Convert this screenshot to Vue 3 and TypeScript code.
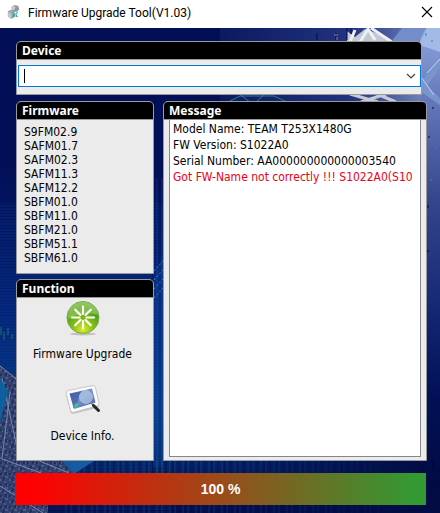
<script setup lang="ts">
import { ref } from 'vue'

interface LogLine {
  text: string
  error?: boolean
}

const device = ref('')
const progress = ref(100)
const firmware: string[] = [
  'S9FM02.9', 'SAFM01.7', 'SAFM02.3', 'SAFM11.3', 'SAFM12.2',
  'SBFM01.0', 'SBFM11.0', 'SBFM21.0', 'SBFM51.1', 'SBFM61.0',
]
const messages: LogLine[] = [
  { text: 'Model Name: TEAM T253X1480G' },
  { text: 'FW Version: S1022A0' },
  { text: 'Serial Number: AA000000000000003540' },
  { text: 'Got FW-Name not correctly !!! S1022A0(S10', error: true },
]
</script>

<template>
  <div class="window">
    <header class="titlebar">
      <svg class="app-icon" viewBox="0 0 16 18" aria-hidden="true">
        <path d="M1 8l4-2 4 2v6l-4 3-4-3z" fill="#a4a8a8" />
        <path d="M5 3l4-2 4 1 1 4-3 3-5-1z" fill="#92999b" />
        <path d="M6 2l4 1-2 4-3-1z" fill="#c9cccc" />
        <path d="M1 9l4 2v5l-4-2z" fill="#c2c5c5" />
        <path d="M6 9l3 2 4-3-2 4 2 3-4-1-3 2 1-4z" fill="#25aab0" />
        <path d="M8 10l2 2 2-1M9 15l1-3" stroke="#a6eeee" fill="none" />
      </svg>
      <h1 class="title">Firmware Upgrade Tool(V1.03)</h1>
      <button class="close" type="button" aria-label="Close">
        <svg viewBox="0 0 12 12"><path d="M1 1l10 10M11 1L1 11" fill="none" stroke="#000" stroke-width="1.1" /></svg>
      </button>
    </header>

    <main class="body">
      <svg class="backdrop" viewBox="0 0 440 485" preserveAspectRatio="none" aria-hidden="true">
        <defs>
          <linearGradient id="base" x1="0" y1="0" x2="0" y2="1">
            <stop offset="0" stop-color="#020f55" />
            <stop offset=".3" stop-color="#021058" />
            <stop offset=".6" stop-color="#022479" />
            <stop offset=".8" stop-color="#043783" />
            <stop offset="1" stop-color="#020e4c" />
          </linearGradient>
          <linearGradient id="side" x1="0" y1="0" x2="0" y2="1">
            <stop offset="0" stop-color="#8fa5dc" />
            <stop offset=".16" stop-color="#6477ba" />
            <stop offset=".38" stop-color="#34458c" />
            <stop offset=".62" stop-color="#142773" />
            <stop offset=".8" stop-color="#021158" />
            <stop offset="1" stop-color="#010b43" />
          </linearGradient>
          <linearGradient id="fade" x1="0" y1="0" x2="1" y2="0">
            <stop offset="0" stop-color="#020e4b" stop-opacity="0" />
            <stop offset="1" stop-color="#020b42" />
          </linearGradient>
          <linearGradient id="sky" x1="0" y1="0" x2="1" y2="0">
            <stop offset="0" stop-color="#0a1a60" />
            <stop offset=".6" stop-color="#223480" />
            <stop offset="1" stop-color="#8294c9" />
          </linearGradient>
          <pattern id="lines" width="11" height="6" patternUnits="userSpaceOnUse">
            <path d="M0 1h11M0 4h11" stroke="#1763ab" stroke-opacity=".2" />
          </pattern>
          <pattern id="bars" width="13" height="40" patternUnits="userSpaceOnUse">
            <path d="M1 0v40M6 0v40" stroke="#1660b0" stroke-opacity=".34" />
            <path d="M4 0v40M10 0v40" stroke="#00062f" stroke-opacity=".45" />
          </pattern>
          <pattern id="grain" width="9" height="11" patternUnits="userSpaceOnUse">
            <path d="M0 1h2M4 3h2M7 6h1M2 7h1M5 9h3" stroke="#858fb7" />
            <path d="M3 0v2M6 4v3M1 5v2M4 9v2" stroke="#050931" />
          </pattern>
        </defs>
        <rect width="440" height="485" fill="url(#base)" />
        <rect y="175" width="170" height="310" fill="url(#lines)" />
        <rect x="150" y="150" width="20" height="300" fill="url(#bars)" />
        <rect x="60" y="432" width="320" height="53" fill="url(#bars)" />
        <rect x="200" y="432" width="240" height="53" fill="url(#fade)" />

        <rect x="220" width="220" height="14" fill="url(#sky)" />
        <rect x="220" y="66" width="220" height="8" fill="url(#sky)" />
        <path d="M347 14V3l8 6 10-8 14 5 14 8z" fill="#c3c8d4" />
        <path d="M350 14l5-12M360 14l8-13 7 11M371 0l21 14" fill="none" stroke="#edf0f5" stroke-width="3" />
        <path d="M347 0v12M351 0v6M317 5v7M336 5v7" stroke="#060b36" />
        <path d="M334 7h4M337 9v3" stroke="#a878a1" />
        <path d="M228 74l12-6h34l13 6M239 66l11 8M265 66l-9 8" fill="none" stroke="#2a799b" />
        <path d="M350 66l28 8M361 74l25-8M377 66l19 8" stroke="#c6cad9" stroke-width="3" />

        <rect x="420" width="20" height="457" fill="url(#side)" />
        <path d="M391 14l11-14h24l-8 14z" fill="#728dca" />
        <path d="M420 14l7-14h13v24l-20-7z" fill="#a3b9e6" />
        <path d="M420 56l20-28v12l-13 18 13 12v7l-20-14z" fill="#7a94cc" />
        <path d="M427 45l13-14M421 49l13 18" stroke="#c3d4f2" />
        <path d="M433 79v2M429 108v2M428 177v3M428 222v2M433 433v8" stroke="#02091f" />
        <path d="M426 5v3M432 12v2M430 72v2M436 118v2M431 151v2" stroke="#238cc6" />

        <path d="M0 337l16 12v73l46 10 12 14H48v39H0z" fill="#30406f" />
        <path d="M0 337l16 12v73l46 10 12 14H48v39H0z" fill="url(#grain)" opacity=".65" />
        <path d="M0 338l16 13M2 350l14 65M10 364L2 431l42 15M0 458l43 27M15 423l54 22" fill="none" stroke="#7a88ae" />
        <path d="M0 350l8 14-8 31z" fill="#0d5f9e" />
        <path d="M62 433h32l-20 13z" fill="#145ba2" />
        <path d="M153 250l10-22v211h-10z" fill="#1250a7" opacity=".25" />
        <path d="M154 243l9-10M154 252l9-10M154 261l9-10M154 270l9-10" stroke="#3486c7" stroke-dasharray="2 2" />
        <path d="M1 299v8M4 304v8M8 300v7M12 306v5" stroke="#22775f" />
      </svg>

      <section class="panel device">
        <h2 class="caption"><label for="device">Device</label></h2>
        <div class="combo">
          <input id="device" v-model="device" class="combo-input" type="text" autocomplete="off" />
          <span class="caret"></span>
          <button class="combo-button" type="button" aria-label="Show devices">
            <svg viewBox="0 0 10 6"><path d="M1 1l4 4 4-4" fill="none" stroke="#444" stroke-width="1.2" /></svg>
          </button>
        </div>
      </section>

      <div class="columns">
        <div class="left">
          <section class="panel">
            <h2 class="caption">Firmware</h2>
            <ul class="firmware">
              <li v-for="name in firmware" :key="name">{{ name }}</li>
            </ul>
          </section>

          <section class="panel function">
            <h2 class="caption">Function</h2>
            <div class="actions">
              <button class="action" type="button">
                <svg class="action-icon" viewBox="0 0 36 36" aria-hidden="true">
                  <defs>
                    <radialGradient id="green" cx=".5" cy=".88" r=".85">
                      <stop offset="0" stop-color="#d9ed25" />
                      <stop offset=".4" stop-color="#83bd16" />
                      <stop offset=".75" stop-color="#4b9e18" />
                      <stop offset="1" stop-color="#76b646" />
                    </radialGradient>
                  </defs>
                  <ellipse cx="18" cy="34" rx="13" ry="1.5" fill="#bfc2bd" />
                  <circle cx="18" cy="17.5" r="16" fill="url(#green)" stroke="#76a951" />
                  <path d="M3 15a15 13 0 0 1 30 0c-8-3-21-2-30 4z" fill="#b9df85" opacity=".45" />
                  <path d="M18 6.500v7.500M18 21v7.500M7 17.500h7.500M21.500 17.500h7.500M10.200 9.700l5.300 5.300M20.500 20l5.300 5.300M25.800 9.700l-5.300 5.300M15.500 20l-5.300 5.300" fill="none" stroke="#fff" stroke-width="2.200" stroke-linecap="round" />
                </svg>
                <span>Firmware Upgrade</span>
              </button>
              <button class="action" type="button">
                <svg class="action-icon" viewBox="0 0 36 36" aria-hidden="true">
                  <defs>
                    <linearGradient id="screen" x1="0" y1="0" x2="1" y2="1">
                      <stop offset="0" stop-color="#4560aa" />
                      <stop offset=".45" stop-color="#7792ce" />
                      <stop offset="1" stop-color="#455fa6" />
                    </linearGradient>
                  </defs>
                  <path d="M3 9.500l25-5q2 0 2.500 2l3.500 17q0 2-2 2.500L8 32q-2 0-2.500-2L1 12q0-2 2-2.500z" fill="#c3c3c3" />
                  <path d="M3 8.500l25-5q2 0 2.500 2l3.500 16q0 2-2 2.500L8 30.500q-2 0-2.500-2L1 11q0-2 2-2.500z" fill="#fafafa" stroke="#bcbcbc" stroke-width=".8" />
                  <path d="M4.500 11.500L27 6.500l3.500 14L9 27z" fill="url(#screen)" />
                  <path d="M5 12l11-2.500L11 25l-2.500 1z" fill="#3654a4" opacity=".6" />
                  <circle cx="21" cy="15" r="6.500" fill="#d2e3f3" fill-opacity=".5" stroke="#b3c5dd" stroke-opacity=".7" />
                  <path d="M9 23l2-2 2 1-1 3-2 1z" fill="#37ce78" />
                  <path d="M26 21l3 2.500" stroke="#888" stroke-width="2" />
                  <path d="M28.500 23.500l5 5" stroke="#252525" stroke-width="3" stroke-linecap="round" />
                </svg>
                <span>Device Info.</span>
              </button>
            </div>
          </section>
        </div>

        <section class="panel message">
          <h2 class="caption">Message</h2>
          <div class="log" role="log">
            <p v-for="line in messages" :key="line.text" :class="{ error: line.error }">{{ line.text }}</p>
          </div>
        </section>
      </div>

      <div class="progress" role="progressbar" aria-valuemin="0" aria-valuemax="100" :aria-valuenow="progress" aria-label="Upgrade progress">
        {{ progress }} %
      </div>
    </main>
  </div>
</template>

<style>
body {
  margin: 0;
}
</style>

<style scoped>
.window {
  display: flex;
  flex-direction: column;
  min-height: 100vh;
  color: #000;
  font-family: "DejaVu Sans Condensed", "DejaVu Sans", sans-serif;
  font-size: 12px;
}
h1, h2, p, ul {
  margin: 0;
  padding: 0;
}
button {
  border: 0;
  padding: 0;
  background: none;
  color: inherit;
  font: inherit;
}
svg {
  display: block;
}
.titlebar {
  display: flex;
  align-items: center;
  box-sizing: border-box;
  height: 28px;
  padding: 0 7px;
  background: #fff;
}
.app-icon {
  width: 14px;
  height: 18px;
  margin-bottom: 5px;
}
.title {
  flex: 1;
  margin-left: 7px;
  padding-bottom: 2px;
  font: 12px/16px Roboto, "Open Sans", sans-serif;
}
.close {
  width: 12px;
  margin-bottom: 4px;
}
.body {
  position: relative;
  isolation: isolate;
  flex: 1;
  display: flex;
  flex-direction: column;
  padding: 13px 13px 8px 16px;
}
.backdrop {
  position: absolute;
  inset: 0;
  z-index: -1;
  width: 100%;
  height: 100%;
}
.panel {
  box-sizing: border-box;
  border: 1px solid #9a9a9a;
  border-radius: 5px 5px 0 0;
  background: #ebebeb;
  overflow: hidden;
}
.caption {
  height: 17px;
  padding-left: 5px;
  border-bottom: 1px solid #999;
  background: #000;
  color: #fff;
  font: bold 12px/17px "Noto Sans", "Open Sans", sans-serif;
}
.device {
  height: 54px;
  margin-right: 5px;
}
.combo {
  position: relative;
  display: flex;
  box-sizing: border-box;
  height: 22px;
  margin: 5px 0 0 1px;
  border: 1px solid #0078d7;
  background: #fff;
}
.combo-input {
  flex: 1;
  min-width: 0;
  border: 0;
  padding: 0 5px;
  outline: 0;
  background: none;
  font: inherit;
}
.caret {
  position: absolute;
  left: 5px;
  top: 3px;
  width: 1px;
  height: 14px;
  background: #000;
}
.combo-button {
  display: grid;
  place-items: center;
  width: 18px;
}
.combo-button svg {
  width: 10px;
}
.columns {
  flex: 1;
  display: grid;
  grid-template-columns: 138px 1fr;
  gap: 9px;
  margin: 6px 0 12px;
}
.left {
  display: flex;
  flex-direction: column;
  gap: 5px;
}
.firmware {
  padding: 5px 7px 8px;
  list-style: none;
  line-height: 14px;
}
.function {
  flex: 1;
}
.actions {
  display: flex;
  flex-direction: column;
  align-items: center;
  gap: 20px;
  padding: 2px 5px 0 0;
}
.action {
  display: flex;
  flex-direction: column;
  align-items: center;
  gap: 10px;
  line-height: 16px;
}
.action-icon {
  width: 36px;
  height: 36px;
}
.message {
  display: flex;
  flex-direction: column;
  min-width: 0;
}
.log {
  flex: 1;
  margin: 0 5px 3px;
  padding: 1px 0 0 3px;
  border: 1px solid #85858f;
  border-top: 0;
  background: #fff;
  line-height: 16px;
  white-space: nowrap;
  overflow: hidden;
}
.error {
  color: #ed0015;
}
.progress {
  height: 32px;
  margin: 0 1px 0 -1px;
  background: linear-gradient(90deg, #f00 4%, #339933 97%);
  color: #fff;
  font: bold 14px/32px "Liberation Sans", sans-serif;
  text-align: center;
}
</style>
